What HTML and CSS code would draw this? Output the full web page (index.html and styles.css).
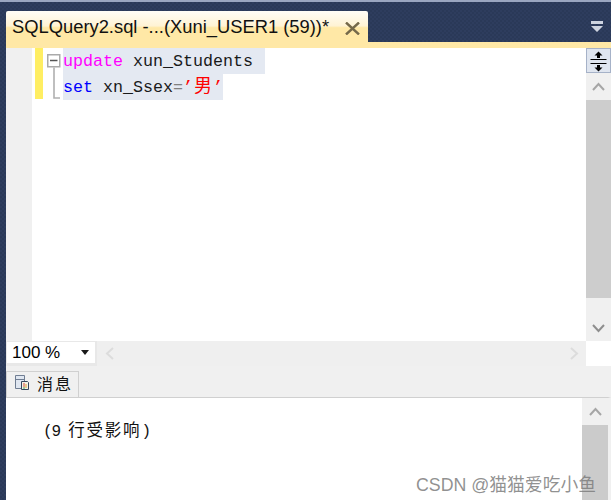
FILE: index.html
```html
<!DOCTYPE html>
<html lang="zh">
<head>
<meta charset="utf-8">
<title>SQLQuery2.sql</title>
<link rel="stylesheet" href="styles.css">
</head>
<body>
<div class="window">
  <div class="topline"></div>
  <div class="tabstrip">
    <div class="tab">
      <span class="tabtitle">SQLQuery2.sql -...(Xuni_USER1 (59))*</span>
      <svg class="tabclose" width="15" height="13" viewBox="0 0 15 13"><path d="M1 .5 14 12.500M14 .5 1 12.500" stroke="#75694a" stroke-width="2.400" fill="none"/></svg>
    </div>
    <svg class="tabmenu" width="12" height="12" viewBox="0 0 12 12"><path d="M0 0H12V3H0ZM0 5H12L6 11Z" fill="#ced4e0"/></svg>
  </div>
  <div class="goldline"></div>
  <div class="editor">
    <div class="gutter"></div>
    <div class="code">
      <div class="changebar"></div>
      <div class="fold">
        <svg width="16" height="52" viewBox="0 0 16 52"><path d="M.75 6.750H12.750V18.750H.75Z" fill="#fff" stroke="#aaa" stroke-width="1.500"/><path d="M3 12.500H10.500" stroke="#555" stroke-width="1.500"/><path d="M7 19.500V50H13" stroke="#b0b0b0" stroke-width="1.600" fill="none"/></svg>
      </div>
      <div class="lines">
        <div class="line"><span class="sel sel-long"><span class="kw-pink">update</span> xun_Students </span></div>
        <div class="line"><span class="sel"><span class="kw-blue">set</span> xn_Ssex<span class="op">=</span><span class="str">’<span class="cjk">男</span>’</span></span></div>
      </div>
    </div>
    <div class="vscroll">
      <div class="splitter">
        <svg width="17" height="22" viewBox="0 0 17 22"><path d="M0.500 9.500H16.500M0.500 13.500H16.500" stroke="#000"/><path d="M8.500 1.500 12.500 5.500H10V8H7V5.500H4.500ZM8.500 21.500 12.500 17.500H10V15H7V17.500H4.500Z" fill="#000"/></svg>
      </div>
      <div class="sbtn sbtn-up"><svg width="13" height="9" viewBox="0 0 13 9"><path d="M1 8 6.500 2 12 8" fill="none" stroke="#a6a6a6" stroke-width="2"/></svg></div>
      <div class="thumb"></div>
      <div class="track"></div>
      <div class="sbtn sbtn-down"><svg width="13" height="9" viewBox="0 0 13 9"><path d="M1 1 6.500 7 12 1" fill="none" stroke="#8e8e8e" stroke-width="2"/></svg></div>
    </div>
  </div>
  <div class="hbar">
    <div class="zoomwrap">
      <div class="zoombox"><span>100 %</span><svg width="10" height="5" viewBox="0 0 10 5"><path d="M1 0H9L5 5Z" fill="#1a1a1a"/></svg></div>
    </div>
    <div class="hscroll">
      <div class="hbtn"><svg width="9" height="13" viewBox="0 0 9 13"><path d="M8 1 2 6.500 8 12" fill="none" stroke="#dcdcdc" stroke-width="2"/></svg></div>
      <div class="htrack"></div>
      <div class="hbtn"><svg width="9" height="13" viewBox="0 0 9 13"><path d="M1 1 7 6.500 1 12" fill="none" stroke="#dcdcdc" stroke-width="2"/></svg></div>
    </div>
    <div class="hcorner"></div>
  </div>
  <div class="splitgap">
    <div class="msgtab">
      <svg width="14" height="15" viewBox="0 0 14 15"><path d="M.5.5H9.500V13.500H.5Z" fill="#dfe6f0" stroke="#6f7d92"/><path d="M1 4.500H9" stroke="#6f7d92"/><path d="M6.500 6.500H12.500L13.500 7.500V14.500H6.500Z" fill="#f4f1e4" stroke="#37465c"/><path d="M8 9H10M8 11H10" stroke="#d84a3a" stroke-width="1.200"/><path d="M8 13H10" stroke="#3fa45f" stroke-width="1.200"/><path d="M11 9V13" stroke="#e0a030"/></svg>
      <span class="msgtitle">消息</span>
    </div>
  </div>
  <div class="results">
    <div class="msgtext"><span class="msglatin">(9 </span><span class="msgcjk">行受影响</span><span class="msglatin">)</span></div>
    <div class="rscroll">
      <div class="sbtn sbtn-rup"><svg width="13" height="9" viewBox="0 0 13 9"><path d="M1 8 6.500 2 12 8" fill="none" stroke="#a6a6a6" stroke-width="2"/></svg></div>
      <div class="rthumb"></div>
    </div>
  </div>
  <div class="watermark">CSDN @猫猫爱吃小鱼</div>
</div>
</body>
</html>
```
FILE: styles.css
```css
* { box-sizing: border-box; }
html, body { margin: 0; padding: 0; }
body { width: 611px; height: 500px; overflow: hidden; background: #2c3b5c; }
.window { position: relative; width: 611px; height: 500px; display: flex; flex-direction: column; padding-left: 6px; background: repeating-conic-gradient(#2e3d5e 0 25%, #2a3958 0 50%) 0 0 / 4px 4px; }
.topline { height: 2px; margin-left: -6px; background: #9aa6c0; flex: none; }
.tabstrip { height: 40px; flex: none; display: flex; align-items: flex-start; padding-top: 9px; justify-content: space-between; }
.tab { width: 362px; height: 31px; background: linear-gradient(#fffdf7 0, #fff3d4 48%, #ffe8a6 54%, #ffe8a6 100%); border-radius: 2px 2px 0 0; display: flex; align-items: center; padding-left: 6px; }
.tabtitle { font: 18.350px "Liberation Sans", Arial, sans-serif; color: #111; white-space: nowrap; width: 333px; flex: none; }
.tabclose { flex: none; margin-top: 3px; }
.tabmenu { margin: 10px 8px 0 0; }
.goldline { height: 6px; flex: none; background: #ffe8a6; }
.editor { height: 293px; flex: none; display: flex; background: #fff; }
.gutter { width: 26px; flex: none; background: #f0f0f0; }
.code { flex: 1; position: relative; display: flex; padding-left: 3px; }
.changebar { width: 8px; height: 51px; background: #ffee62; flex: none; }
.fold { width: 20px; flex: none; padding-left: 4px; }
.fold svg { display: block; }
.lines { font: 16.670px/28px "Liberation Mono", "Noto Sans CJK SC", monospace; color: #1a1a1a; }
.line { height: 26px; white-space: pre; }
.sel { display: inline-block; height: 26px; background: #e4e9f2; vertical-align: top; }
.sel-long { padding-right: 2px; }
.kw-pink { color: #ff00ff; }
.kw-blue { color: #0000ff; }
.op { color: #808080; }
.str { color: #ff0000; }
.cjk { font-size: 18px; line-height: 18px; margin: 0 1px; }
.vscroll { width: 25px; flex: none; display: flex; flex-direction: column; }
.splitter { height: 25px; background: #dfe5ef; border: 1px solid #a6b2c8; display: flex; align-items: center; justify-content: center; flex: none; }
.sbtn { flex: none; display: flex; align-items: center; justify-content: center; background: #f0f0f0; }
.sbtn-up { height: 27px; }
.thumb { height: 198px; flex: none; background: #cdcdcd; }
.track { flex: 1; background: #f0f0f0; }
.sbtn-down { height: 25px; }
.hbar { height: 25px; flex: none; display: flex; background: #f0f0f0; }
.zoomwrap { width: 91px; flex: none; background: #e8e8e8; }
.zoombox { width: 88px; height: 21px; margin: 1px 0 0 1px; background: #fff; display: flex; align-items: center; justify-content: space-between; padding: 0 5px 0 5px; font: 17px "Liberation Sans", Arial, sans-serif; color: #000; }
.hscroll { flex: 1; display: flex; background: #efefef; }
.hbtn { width: 24px; display: flex; align-items: center; justify-content: center; flex: none; }
.htrack { flex: 1; }
.hcorner { width: 25px; flex: none; background: #fff; }
.splitgap { height: 31px; flex: none; background: #f0f0f0; display: flex; align-items: flex-end; }
.msgtab { width: 73px; height: 26px; background: #f0f0f0; border: 1px solid #d0d0d0; border-bottom: none; display: flex; align-items: center; gap: 8px; padding: 0 0 4px 8px; }
.msgtitle { font: 16px/20px "Noto Sans CJK SC", sans-serif; color: #111; letter-spacing: 2px; white-space: nowrap; }
.results { flex: 1; display: flex; background: #fff; border-top: 1px solid #d0d0d0; border-right: 3px solid #f0f0f0; min-height: 0; }
.msgtext { flex: 1; padding: 22px 0 0 37px; font: 16px/24px "Liberation Mono", "Noto Sans CJK SC", monospace; color: #111; white-space: pre; }
.msglatin { letter-spacing: -1.200px; }
.msgcjk { font-size: 16.500px; letter-spacing: 1.800px; }
.rscroll { width: 26px; flex: none; display: flex; flex-direction: column; }
.sbtn-rup { height: 27px; }
.rthumb { flex: 1; background: #cbcbcb; }
.watermark { position: absolute; right: 15px; top: 470px; font: 17.800px "Liberation Sans", "Noto Sans CJK SC", sans-serif; color: rgba(125,125,125,.85); white-space: nowrap; }
```
